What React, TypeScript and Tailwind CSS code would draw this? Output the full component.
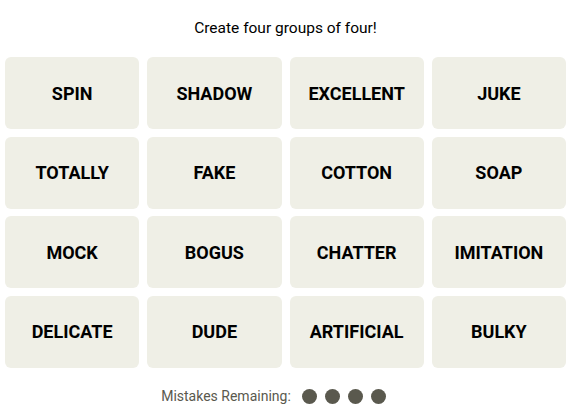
const words = [
  "SPIN", "SHADOW", "EXCELLENT", "JUKE",
  "TOTALLY", "FAKE", "COTTON", "SOAP",
  "MOCK", "BOGUS", "CHATTER", "IMITATION",
  "DELICATE", "DUDE", "ARTIFICIAL", "BULKY",
];

export default function App() {
  return (
    <div className="w-[571px] h-[409px] bg-white flex flex-col items-center font-['Roboto',sans-serif]">
      <p className="mt-[18px] h-[20px] leading-[20px] text-[15.5px] text-black">Create four groups of four!</p>
      <div className="mt-[19px] grid grid-cols-4 gap-x-[8px] gap-y-[7.5px] w-[561px]">
        {words.map((w) => (
          <button
            key={w}
            className="h-[72px] rounded-[6px] bg-[#efefe6] text-[18px] font-bold text-black"
          >
            {w}
          </button>
        ))}
      </div>
      <div className="mt-[18px] mr-[24px] flex items-center">
        <span className="text-[14px] text-[#5a594e]">Mistakes Remaining:</span>
        <div className="ml-[11px] flex gap-[8px]">
          <span className="w-[15px] h-[15px] rounded-full bg-[#5a594e]" />
          <span className="w-[15px] h-[15px] rounded-full bg-[#5a594e]" />
          <span className="w-[15px] h-[15px] rounded-full bg-[#5a594e]" />
          <span className="w-[15px] h-[15px] rounded-full bg-[#5a594e]" />
        </div>
      </div>
    </div>
  );
}
